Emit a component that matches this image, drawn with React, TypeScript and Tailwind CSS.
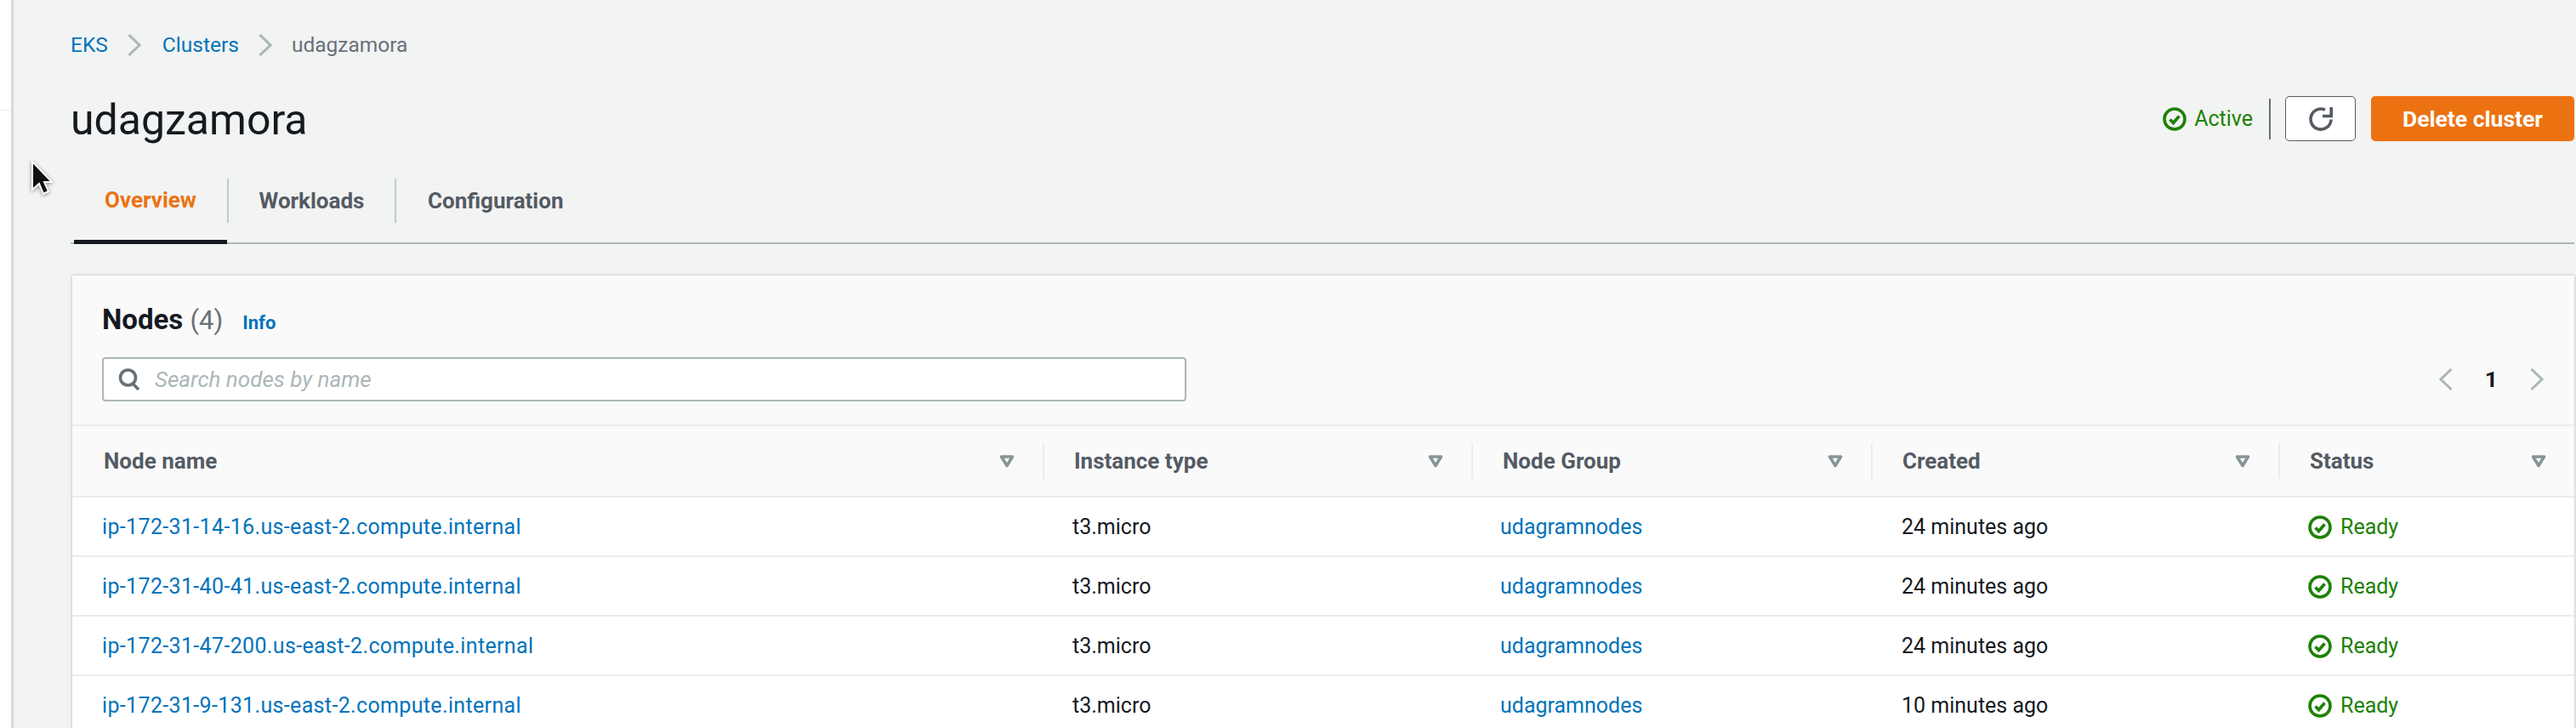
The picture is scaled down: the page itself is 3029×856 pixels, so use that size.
import React from "react";

const font = "font-['Roboto',sans-serif]";

const nodes = [
  { name: "ip-172-31-14-16.us-east-2.compute.internal", created: "24 minutes ago" },
  { name: "ip-172-31-40-41.us-east-2.compute.internal", created: "24 minutes ago" },
  { name: "ip-172-31-47-200.us-east-2.compute.internal", created: "24 minutes ago" },
  { name: "ip-172-31-9-131.us-east-2.compute.internal", created: "10 minutes ago" },
];

const columns = ["Node name", "Instance type", "Node Group", "Created", "Status"];
const gridCols = "grid grid-cols-[1141px_504px_470px_479px_1fr]";

function StatusIcon() {
  return (
    <svg viewBox="0 0 28 28" className="h-7 w-7 shrink-0" fill="none" stroke="#1d8102" strokeWidth="3.6">
      <circle cx="14" cy="14" r="12" />
      <path d="M8.5 14.5l4 4 7-8" />
    </svg>
  );
}

function Chevron({ left = false, className = "" }: { left?: boolean; className?: string }) {
  return (
    <svg viewBox="0 0 16 26" className={`h-[26px] w-4 shrink-0 ${className}`} fill="none" stroke="#aab7b8" strokeWidth="3">
      <path d={left ? "M14.5 1L2 13l12.5 12" : "M1.5 1L14 13 1.5 25"} />
    </svg>
  );
}

function SortIcon() {
  return (
    <svg viewBox="0 0 18 15" className="h-[15px] w-[18px] shrink-0" fill="none" stroke="#879596" strokeWidth="3.6">
      <path d="M2.5 2h13L9 12.5z" strokeLinejoin="round" />
    </svg>
  );
}

function Cursor() {
  return (
    <svg
      viewBox="0 0 26 42"
      className="absolute left-[36px] top-[188px] h-[42px] w-[26px] drop-shadow-[0_1px_2px_rgba(0,0,0,0.45)]"
    >
      <path d="M2 2v33l8-7 5 12 6-3-5-11h9z" fill="#111" stroke="#fff" strokeWidth="2" />
    </svg>
  );
}

export default function App() {
  return (
    <div className={`relative flex h-[856px] w-[3029px] overflow-hidden bg-white ${font}`}>
      <Cursor />
      <div className="w-[13px] shrink-0 bg-white">
        <div className="mt-[129px] h-px bg-[#eaeded]" />
      </div>
      <div className="flex min-w-0 flex-1 flex-col border-l-[3px] border-[#d5dbdb] bg-[#f2f3f3] pl-[67px] pr-[2px]">
        <nav className="mt-[40px] flex h-[26px] items-center text-[24.5px] text-[#687078]">
          <a className="text-[#0073bb]">EKS</a>
          <Chevron className="ml-[23px] mr-[25px]" />
          <a className="text-[#0073bb]">Clusters</a>
          <Chevron className="ml-[23px] mr-[23px]" />
          <span>udagzamora</span>
        </nav>

        <header className="mt-[47px] flex h-[53px] items-center justify-between">
          <h1 className="pt-[2px] text-[50px] leading-none text-[#16191f]">udagzamora</h1>
          <div className="flex items-center">
            <StatusIcon />
            <span className="ml-[9px] text-[25px] text-[#1d8102]">Active</span>
            <div className="ml-[19px] h-12 w-[2px] bg-[#687078]" />
            <button className="ml-[17px] flex h-[53px] w-[83px] items-center justify-center rounded-[5px] border-[1.5px] border-[#545b64] bg-white">
              <svg viewBox="0 0 28 28" className="h-7 w-7" fill="none" stroke="#545b64" strokeWidth="3.6">
                <path d="M26 14.5A12 12 0 1 1 19 3.2" />
                <path d="M26.2 0v10.5H16" />
              </svg>
            </button>
            <button className="ml-[18px] h-[53px] w-[239px] rounded-[5px] bg-[#ec7211] text-[26.5px] font-bold text-white">
              Delete cluster
            </button>
          </div>
        </header>

        <div className="mt-[44px] flex h-[77px] border-b-2 border-[#aab7b8] text-[26px] font-bold">
          <div className="ml-[4px] flex h-[77px] w-[180px] items-center justify-center border-b-[5px] border-[#16191f] pb-[22px] text-[#ec7211]">
            Overview
          </div>
          <div className="flex h-[52px] w-[197px] items-center justify-center border-l-2 border-[#c3c9c9] text-[#545b64]">
            Workloads
          </div>
          <div className="flex h-[52px] items-center border-l-2 border-[#c3c9c9] pl-[37px] text-[#545b64]">
            Configuration
          </div>
        </div>

        <section className="ml-[2px] mt-[37px] flex-1 bg-white shadow-[0_0_3px_rgba(0,28,36,0.3)]">
          <div className="bg-[#fafafa]">
            <div className="flex h-[96px] items-center justify-between pl-[35px] pr-[35px]">
              <div className="flex items-baseline pt-[8px]">
                <h2 className="text-[33px] font-bold text-[#16191f]">
                  Nodes <span className="text-[31px] font-normal text-[#687078]">(4)</span>
                </h2>
                <a className="ml-[23px] text-[22px] font-bold text-[#0073bb]">Info</a>
              </div>
            </div>
            <div className="flex items-center justify-between pb-[27px] pl-[35px] pr-[36px]">
              <div className="flex h-[52px] w-[1275px] items-center rounded-[4px] border-2 border-[#aab7b8] bg-white pl-[17px]">
                <svg viewBox="0 0 26 26" className="h-[26px] w-[26px]" fill="none" stroke="#687078" strokeWidth="3.6">
                  <circle cx="11.5" cy="11" r="9" />
                  <path d="M17 18l7 7" />
                </svg>
                <span className="ml-[17px] text-[26px] italic text-[#aab7b8]">Search nodes by name</span>
              </div>
              <div className="flex items-center">
                <Chevron left />
                <span className="mx-[38px] text-[26.5px] font-bold text-[#16191f]">1</span>
                <Chevron />
              </div>
            </div>
            <div className={`${gridCols} h-[86px] items-center border-y-2 border-[#eaeded]`}>
              {columns.map((label, i) => (
                <div
                  key={label}
                  className={`flex h-[42px] items-center justify-between pr-[33px] text-[26px] font-bold text-[#545b64] ${i > 0 ? "border-l-2 border-[#eaeded] pl-[35px]" : "pl-[37px]"}`}
                >
                  {label}
                  <SortIcon />
                </div>
              ))}
            </div>
          </div>
          {nodes.map((node) => (
            <div key={node.name} className={`${gridCols} h-[70px] items-center border-b-2 border-[#eaeded] pt-[2px] text-[25px]`}>
              <a className="pl-[35px] tracking-[0.35px] text-[#0073bb]">{node.name}</a>
              <span className="pl-[35px] text-[#16191f]">t3.micro</span>
              <a className="pl-[34px] text-[#0073bb]">udagramnodes</a>
              <span className="pl-[36px] text-[#16191f]">{node.created}</span>
              <span className="flex items-center gap-[10px] pl-[35px] text-[#1d8102]">
                <StatusIcon />
                Ready
              </span>
            </div>
          ))}
        </section>
      </div>
    </div>
  );
}
